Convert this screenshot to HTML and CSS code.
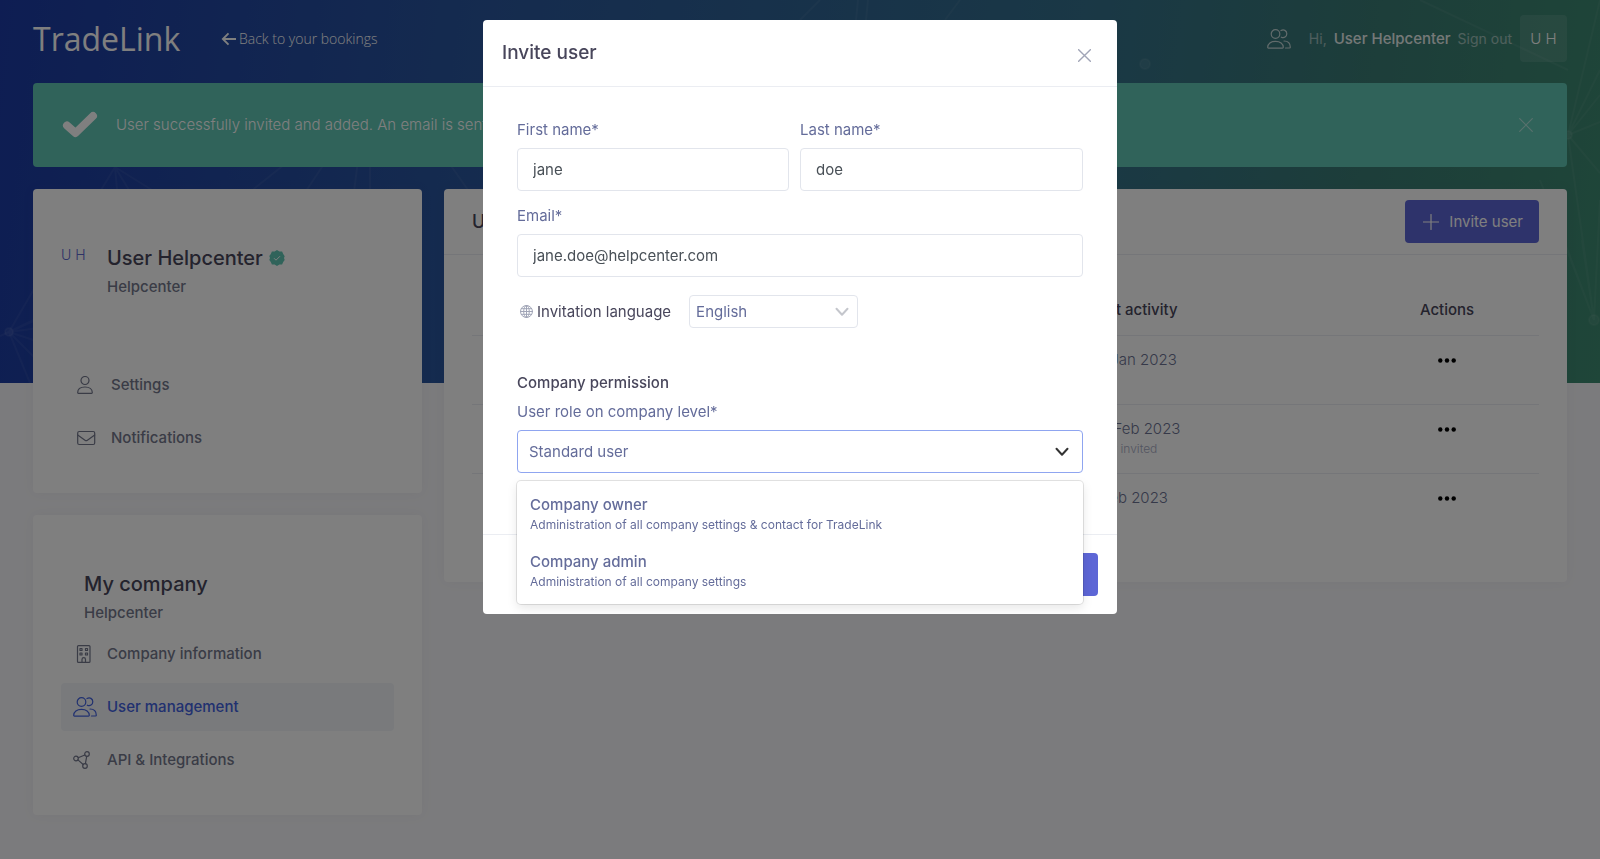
FILE: index.html
```html
<!DOCTYPE html>
<html lang="en">
<head>
    <meta charset="UTF-8">
    <meta name="viewport" content="width=device-width, initial-scale=1.0">
    <title>TradeLink - User management</title>
    <link rel="stylesheet" href="styles.css">
</head>
<body>
    <!-- shared icons -->
    <svg class="sprite" aria-hidden="true">
        <symbol id="icon-people" viewBox="0 0 24 20">
            <circle cx="8.5" cy="5" r="4.3"/>
            <path d="M.7 18.3c0-3.7 3.2-6 7.8-6s7.8 2.300 7.800 6c0 .5-.3.800-.800.800h-14c-.5 0-.8-.3-.8-.8z"/>
            <path d="M14 1.600c2.700-1.700 5.800 0 5.800 3.100 0 3-2.800 4.800-5.500 3.500M17 12c3.800 0 6.300 2.300 6.300 6.200 0 .5-.3.8-.8.8h-4"/>
        </symbol>
        <symbol id="icon-close" viewBox="0 0 14 14">
            <path d="M.7.7l12.600 12.600M13.300.7L.7 13.300"/>
        </symbol>
        <symbol id="icon-chevron" viewBox="0 0 14 10">
            <path d="M1.500 1.800L7 7.800l5.500-6"/>
        </symbol>
        <symbol id="icon-dots" viewBox="0 0 18 5">
            <circle cx="2.300" cy="2.500" r="2.200"/>
            <circle cx="9" cy="2.500" r="2.200"/>
            <circle cx="15.700" cy="2.500" r="2.200"/>
        </symbol>
    </svg>

    <div class="hero">
        <svg class="hero-lines" viewBox="0 0 1600 383" preserveAspectRatio="none" aria-hidden="true">
            <path d="M9 332L45 270M9 332L80 300M9 332L60 325M9 332L70 352M9 332L60 383M9 332L30 383M9 332L0 336M9 332L50 312"/>
            <path d="M115 167L95 200M115 167L118 200M115 167L135 200M115 167L160 195M290 160L240 200M330 155L300 200M358 160L353 200M370 160L370 200M440 150L475 200"/>
            <path d="M820 0L800 20M858 0L856 20M868 0L866 20M960 0L945 20M1420 0L1568 70"/>
            <path d="M1568 135L1600 0M1568 135L1600 70M1568 135L1600 122M1568 135L1600 173M1568 135L1594 320M1568 135L1600 95M1594 320L1540 180M1594 320L1582 240M1594 320L1600 200M1594 320L1560 230"/>
            <circle cx="9" cy="332" r="4"/>
            <circle cx="1145" cy="64" r="5"/>
            <circle cx="1568" cy="135" r="4"/>
            <circle cx="1594" cy="320" r="5"/>
        </svg>
    </div>

    <div class="page">
        <header class="topbar">
            <a class="logo" href="#">TradeLink</a>
            <a class="back-link" href="#">
                <svg width="15" height="14" viewBox="0 0 16 14" aria-hidden="true"><path d="M8 1L2 7l6 6M2 7h14"/></svg>
                Back to your bookings
            </a>
            <div class="account">
                <svg class="icon account-icon" width="24" height="20" aria-hidden="true"><use href="#icon-people"/></svg>
                <span class="hi">Hi,</span>
                <span class="account-name">User Helpcenter</span>
                <a class="sign-out" href="#">Sign out</a>
                <span class="initials">U H</span>
            </div>
        </header>

        <div class="alert">
            <svg class="alert-check" width="36" height="28" viewBox="0 0 36 28" aria-hidden="true"><path d="M5 14.500L13.500 22 31 5"/></svg>
            <span>User successfully invited and added. An email is sent.</span>
            <button class="alert-close" type="button" aria-label="Dismiss">
                <svg class="icon" width="14" height="14"><use href="#icon-close"/></svg>
            </button>
        </div>

        <div class="columns">
            <aside class="sidebar">
                <section class="card">
                    <div class="profile">
                        <span class="profile-initials">U H</span>
                        <div>
                            <h2>
                                User Helpcenter
                                <svg width="16" height="16" viewBox="0 0 16 16" aria-hidden="true">
                                    <path fill="#60c6b4" d="M8 0l2.400 1.400 2.700.2 1.100 2.400L15.700 6.200 15 8l.7 1.900-1.500 2.200-1.100 2.300-2.700.2L8 16l-2.400-1.400-2.700-.2L1.800 12 .3 9.900 1 8 .3 6.100l1.500-2.200 1.100-2.300 2.700-.2z"/>
                                    <path fill="none" stroke="#fff" d="M5 8.200l2 2 4-4"/>
                                </svg>
                            </h2>
                            <p class="company">Helpcenter</p>
                        </div>
                    </div>
                    <nav class="menu menu-profile">
                        <a href="#">
                            <svg class="icon" width="24" height="18" viewBox="0 0 24 18" aria-hidden="true"><circle cx="8" cy="4.500" r="4"/><path d="M.7 16.500c0-3.500 3-5.500 7.300-5.500s7.300 2 7.300 5.500c0 .5-.2.8-.7.8H1.400c-.5 0-.7-.3-.7-.8z"/></svg>
                            Settings
                        </a>
                        <a href="#">
                            <svg class="icon" width="24" height="18" viewBox="0 0 24 18" aria-hidden="true"><rect x=".7" y="2.500" width="17" height="13" rx="1.500"/><path d="M.7 6l7.300 5.200c.7.500 1.700.5 2.400 0L17.700 6"/></svg>
                            Notifications
                        </a>
                    </nav>
                </section>

                <section class="card">
                    <div class="company-head">
                        <h2>My company</h2>
                        <p class="company">Helpcenter</p>
                    </div>
                    <nav class="menu">
                        <a href="#">
                            <svg class="icon" width="24" height="18" viewBox="0 0 24 18" aria-hidden="true"><rect x="4.500" y=".6" width="12.500" height="16.800" rx="1"/><rect x="7" y="3.500" width="2" height="2"/><rect x="12.500" y="3.500" width="2" height="2"/><rect x="7" y="8" width="2" height="2"/><rect x="12.500" y="8" width="2" height="2"/><path d="M9 17.400v-3c0-2.400 3.500-2.400 3.500 0v3"/></svg>
                            Company information
                        </a>
                        <a class="active" href="#">
                            <svg class="icon" width="24" height="20" aria-hidden="true"><use href="#icon-people"/></svg>
                            User management
                        </a>
                        <a href="#">
                            <svg class="icon" width="24" height="18" viewBox="0 0 24 18" aria-hidden="true"><circle cx="3" cy="7.500" r="2.300"/><circle cx="14" cy="3" r="2.300"/><circle cx="12" cy="15" r="2.300"/><path d="M5.200 6.700L11.800 4M4.900 8.900l5.300 4.600M13.700 5.300l-1.300 7.400"/></svg>
                            API &amp; Integrations
                        </a>
                    </nav>
                </section>
            </aside>

            <main class="card users">
                <div class="users-head">
                    <h1>Users</h1>
                    <button class="btn" type="button">
                        <svg class="icon" width="16" height="16" viewBox="0 0 16 16" aria-hidden="true"><path d="M8 .500v15M.5 8h15"/></svg>
                        Invite user
                    </button>
                </div>
                <table>
                    <thead>
                        <tr>
                            <th class="col-name">Name</th>
                            <th>Last activity</th>
                            <th class="col-actions">Actions</th>
                        </tr>
                    </thead>
                    <tbody>
                        <tr>
                            <td class="col-name">User</td>
                            <td>10 Jan 2023</td>
                            <td class="col-actions"><button type="button" aria-label="Actions"><svg width="18" height="5"><use href="#icon-dots"/></svg></button></td>
                        </tr>
                        <tr>
                            <td class="col-name">User</td>
                            <td>22 Feb 2023<small>User invited</small></td>
                            <td class="col-actions"><button type="button" aria-label="Actions"><svg width="18" height="5"><use href="#icon-dots"/></svg></button></td>
                        </tr>
                        <tr>
                            <td class="col-name">User</td>
                            <td>1 Feb 2023</td>
                            <td class="col-actions"><button type="button" aria-label="Actions"><svg width="18" height="5"><use href="#icon-dots"/></svg></button></td>
                        </tr>
                    </tbody>
                </table>
            </main>
        </div>
    </div>

    <div class="overlay">
        <div class="modal" role="dialog" aria-modal="true" aria-labelledby="modal-title">
            <div class="modal-header">
                <h2 id="modal-title">Invite user</h2>
                <button class="modal-close" type="button" aria-label="Close">
                    <svg class="icon" width="13" height="13"><use href="#icon-close"/></svg>
                </button>
            </div>
            <form>
                <div class="modal-body">
                    <div class="name-row">
                        <div class="field">
                            <label for="first-name">First name*</label>
                            <input type="text" id="first-name" value="jane">
                        </div>
                        <div class="field">
                            <label for="last-name">Last name*</label>
                            <input type="text" id="last-name" value="doe">
                        </div>
                    </div>
                    <div class="field">
                        <label for="email">Email*</label>
                        <input type="email" id="email" value="jane.doe@helpcenter.com">
                    </div>
                    <div class="language-row">
                        <svg class="icon globe" width="13" height="13" viewBox="0 0 13 13" aria-hidden="true"><circle cx="6.500" cy="6.500" r="6"/><ellipse cx="6.500" cy="6.500" rx="2.800" ry="6"/><path d="M6.500.5v12M.5 6.500h12M1.300 3.700h10.400M1.300 9.300h10.400"/></svg>
                        <label for="language">Invitation language</label>
                        <div class="select-wrap">
                            <select id="language">
                                <option>English</option>
                            </select>
                            <svg class="icon chevron" width="14" height="10" aria-hidden="true"><use href="#icon-chevron"/></svg>
                        </div>
                    </div>
                    <h3>Company permission</h3>
                    <div class="field">
                        <label for="role">User role on company level*</label>
                        <div class="select-wrap role">
                            <select id="role">
                                <option>Standard user</option>
                                <option>Company owner</option>
                                <option>Company admin</option>
                            </select>
                            <svg class="icon chevron" width="14" height="10" aria-hidden="true"><use href="#icon-chevron"/></svg>
                            <ul class="role-menu" role="listbox">
                                <li role="option">
                                    <strong>Company owner</strong>
                                    <span>Administration of all company settings &amp; contact for TradeLink</span>
                                </li>
                                <li role="option">
                                    <strong>Company admin</strong>
                                    <span>Administration of all company settings</span>
                                </li>
                            </ul>
                        </div>
                    </div>
                </div>
                <div class="modal-footer">
                    <button class="btn" type="submit" aria-label="Send invitation"></button>
                </div>
            </form>
        </div>
    </div>
</body>
</html>
```
FILE: styles.css
```css
* {
    box-sizing: border-box;
}
body {
    margin: 0;
    min-height: 100vh;
    background: #f7f7fa;
    color: #74788d;
    font-family: Inter, "Open Sans", sans-serif;
    font-size: 15px;
    line-height: 20px;
}
h1, h2, h3, p, ul {
    margin: 0;
    padding: 0;
}
a {
    color: inherit;
    text-decoration: none;
}
button, input, select {
    font: inherit;
}
button {
    cursor: pointer;
}
.sprite {
    position: absolute;
    width: 0;
    height: 0;
}
.icon {
    flex: none;
    fill: none;
    stroke: currentColor;
    stroke-width: 1.2;
    stroke-linecap: round;
    stroke-linejoin: round;
}

/* blue to green background behind the top of the page */
.hero {
    position: absolute;
    top: 0;
    left: 0;
    right: 0;
    height: 383px;
    background: linear-gradient(97deg, #1c3ba6 0%, #2a579e 30%, #34708c 66%, #3a7c74 84%, #3e8c72 100%);
}
.hero-lines {
    display: block;
    width: 100%;
    height: 100%;
    fill: rgba(255, 255, 255, 0.06);
    stroke: rgba(255, 255, 255, 0.05);
    stroke-width: 2;
}
.page {
    position: relative;
    padding: 0 33px 45px;
}

/* top bar */
.topbar {
    display: flex;
    align-items: center;
    height: 83px;
    padding-bottom: 6px;
    color: #fff;
}
.logo {
    width: 188px;
    font-family: "Open Sans", sans-serif;
    font-size: 32px;
    line-height: 40px;
}
.back-link {
    display: flex;
    align-items: center;
    gap: 3px;
    font-family: "Open Sans", sans-serif;
    font-size: 14px;
    font-weight: 300;
}
.back-link svg {
    fill: none;
    stroke: currentColor;
    stroke-width: 2;
}
.account {
    display: flex;
    align-items: center;
    margin-left: auto;
}
.account-icon {
    margin-right: 18px;
    opacity: 0.7;
}
.hi, .sign-out {
    font-size: 14px;
    opacity: 0.5;
}
.account-name {
    margin: 0 7px;
    font-weight: 500;
    opacity: 0.9;
}
.initials {
    width: 47px;
    margin-left: 8px;
    border-radius: 4px;
    background: rgba(255, 255, 255, 0.1);
    font-weight: 300;
    line-height: 47px;
    text-align: center;
}

/* success message */
.alert {
    display: flex;
    align-items: center;
    gap: 18px;
    height: 84px;
    padding: 0 34px 0 29px;
    border-radius: 4px;
    background: #60c6b4;
    color: #fff;
    font-weight: 300;
}
.alert-check {
    fill: none;
    stroke: #fff;
    stroke-width: 8;
    stroke-linecap: round;
    stroke-linejoin: round;
}
.alert-close {
    display: flex;
    margin-left: auto;
    padding: 0;
    border: 0;
    background: none;
    color: rgba(255, 255, 255, 0.5);
}

/* columns and cards */
.columns {
    display: grid;
    grid-template-columns: 389px 1fr;
    align-items: start;
    gap: 22px;
    margin-top: 22px;
}
.sidebar {
    display: flex;
    flex-direction: column;
    gap: 22px;
}
.card {
    padding: 28px 28px 31px;
    border-radius: 4px;
    background: #fff;
    box-shadow: 0 0 13px rgba(82, 63, 105, 0.05);
}
.card h2 {
    display: flex;
    align-items: center;
    gap: 6px;
    color: #48465b;
    font-size: 20px;
    font-weight: 500;
    line-height: 28px;
}
.company {
    margin-top: 5px;
    font-weight: 500;
}
.profile {
    display: flex;
    gap: 23px;
    padding-top: 27px;
}
.profile-initials {
    width: 23px;
    color: #5d66cf;
    font-size: 14px;
    font-weight: 300;
    line-height: 22px;
    white-space: nowrap;
}
.company-head {
    padding: 27px 0 7px 23px;
}
.menu {
    display: flex;
    flex-direction: column;
    gap: 5px;
}
.menu a {
    display: flex;
    align-items: center;
    gap: 10px;
    height: 48px;
    padding-left: 12px;
    border-radius: 4px;
    font-weight: 500;
}
.menu .active {
    background: #f2f4f9;
    color: #4262e0;
}
.menu-profile {
    margin-top: 64px;
}
.menu-profile a {
    padding-left: 16px;
}

/* users table */
.users {
    min-height: 393px;
    padding: 0;
}
.users-head {
    display: flex;
    align-items: center;
    justify-content: space-between;
    height: 66px;
    padding: 0 28px;
    border-bottom: 1px solid #ebedf2;
}
.users-head h1 {
    color: #48465b;
    font-size: 18px;
    font-weight: 500;
}
.btn {
    display: flex;
    align-items: center;
    gap: 10px;
    min-width: 64px;
    height: 43px;
    padding: 0 16px 0 18px;
    border: 0;
    border-radius: 4px;
    background: #5d66d6;
    color: #fff;
}
table {
    width: calc(100% - 56px);
    margin: 29px 28px 0;
    border-collapse: separate;
    border-spacing: 0;
    table-layout: fixed;
}
th {
    height: 52px;
    padding: 0;
    border-bottom: 1px solid #ebedf2;
    color: #48465b;
    font-weight: 500;
    text-align: left;
}
td {
    height: 69px;
    padding: 14px 0 0;
    color: #6c7293;
    font-weight: 300;
    vertical-align: top;
}
td small {
    display: block;
    color: #a7abc3;
    font-size: 12px;
}
tbody tr:not(:last-child) td {
    border-bottom: 1px solid #ebedf2;
}
.col-name {
    width: 58%;
    padding-left: 28px;
}
.col-actions {
    width: 184px;
    text-align: center;
}
.col-actions button {
    padding: 0;
    border: 0;
    background: none;
    line-height: 20px;
}
.col-actions svg {
    vertical-align: middle;
}

/* invite dialog */
.overlay {
    position: fixed;
    inset: 0;
    display: flex;
    align-items: flex-start;
    justify-content: center;
    padding: 20px;
    background: rgba(0, 0, 0, 0.5);
}
.modal {
    width: 100%;
    max-width: 634px;
    border-radius: 4px;
    background: #fff;
}
.modal-header {
    display: flex;
    align-items: center;
    justify-content: space-between;
    height: 67px;
    padding: 0 26px 0 19px;
    border-bottom: 1px solid #ebedf2;
}
.modal-header h2 {
    color: #48465b;
    font-size: 19px;
    font-weight: 500;
}
.modal-close {
    display: flex;
    padding: 4px 0 0;
    border: 0;
    background: none;
    color: #a1a5b7;
}
.modal-close .icon {
    stroke-width: 1.5;
}
.modal-body {
    padding: 33px 34px 61px;
}
.name-row {
    display: grid;
    grid-template-columns: 272px 1fr;
    gap: 11px;
    margin-bottom: 15px;
}
.field label {
    display: block;
    margin-bottom: 8px;
    color: #646c9a;
}
.field input {
    display: block;
    width: 100%;
    height: 43px;
    padding: 0 15px;
    border: 1px solid #e2e5ec;
    border-radius: 4px;
    background: #fff;
    color: #495057;
}
.language-row {
    display: flex;
    align-items: center;
    margin: 18px 0 45px;
    padding-left: 3px;
    color: #48465b;
}
.globe {
    margin-right: 4px;
    stroke-width: 1;
    color: #a1a5b7;
}
.select-wrap {
    position: relative;
}
.select-wrap select {
    display: block;
    width: 100%;
    height: 43px;
    padding: 0 11px;
    border: 1px solid #e2e5ec;
    border-radius: 4px;
    background: #fff;
    color: #646c9a;
    appearance: none;
}
.language-row .select-wrap {
    width: 169px;
    margin-left: 18px;
}
.language-row select {
    height: 33px;
    padding: 0 6px;
}
.chevron {
    position: absolute;
    top: 50%;
    right: 9px;
    margin-top: -5px;
    stroke-width: 2;
    color: #c4c6cc;
    pointer-events: none;
}
.modal-body h3 {
    margin-bottom: 9px;
    color: #48465b;
    font-size: 15px;
    font-weight: 500;
}
.role select {
    border-color: #8fa5f0;
}
.role .chevron {
    right: 14px;
    color: #333;
}
.role-menu {
    position: absolute;
    top: 51px;
    left: 0;
    right: 0;
    padding: 14px 13px 12px;
    border-radius: 4px;
    background: #fff;
    box-shadow: 0 0 0 1px rgba(0, 0, 0, 0.1), 0 4px 11px rgba(0, 0, 0, 0.1);
    color: #646c9a;
    list-style: none;
}
.role-menu li + li {
    margin-top: 17px;
}
.role-menu strong, .role-menu span {
    display: block;
}
.role-menu strong {
    font-weight: 500;
}
.role-menu span {
    font-size: 12px;
}
.modal-footer {
    display: flex;
    justify-content: flex-end;
    padding: 18px 19px;
    border-top: 1px solid #ebedf2;
}
```
